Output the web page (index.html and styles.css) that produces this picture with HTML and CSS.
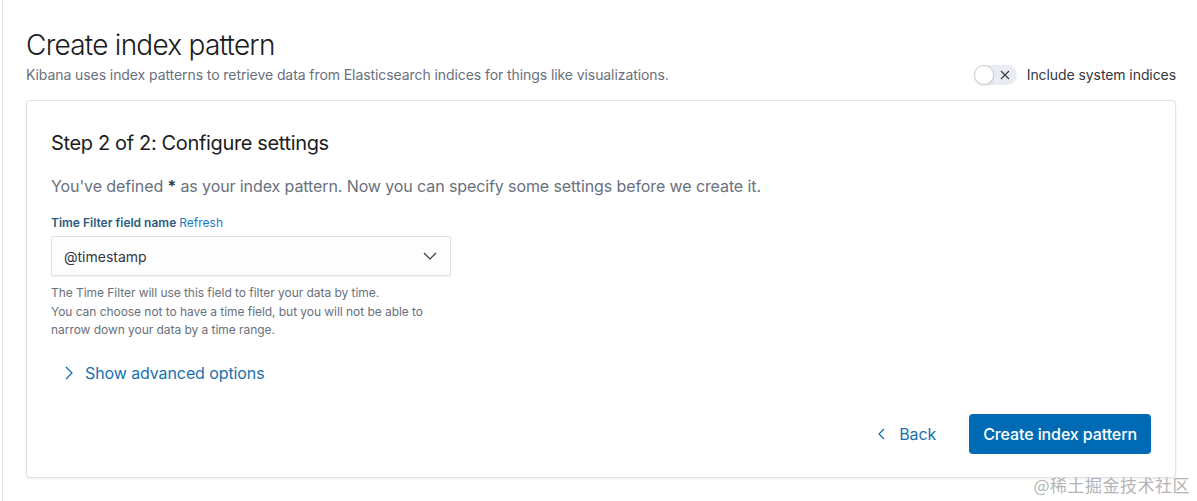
FILE: index.html
```html
<!DOCTYPE html>
<html lang="en">
<head>
  <meta charset="UTF-8">
  <meta name="viewport" content="width=device-width, initial-scale=1.0">
  <title>Create index pattern</title>
  <link rel="stylesheet" href="styles.css">
</head>
<body>
  <div class="page">
    <div class="header">
      <div class="header-text">
        <h1 class="title">Create index pattern</h1>
        <p class="subtitle">Kibana uses index patterns to retrieve data from Elasticsearch indices for things like visualizations.</p>
      </div>
      <label class="switch">
        <span class="switch-track">
          <span class="switch-thumb"></span>
          <svg class="switch-x" width="10" height="10" viewBox="0 0 10 10">
            <path d="M1 1 L9 9 M9 1 L1 9" stroke="#343741" stroke-width="1.1" fill="none"/>
          </svg>
        </span>
        <span class="switch-label">Include system indices</span>
      </label>
    </div>

    <div class="panel">
      <h2 class="step-title">Step 2 of 2: Configure settings</h2>
      <p class="step-desc">You've defined <strong>*</strong> as your index pattern. Now you can specify some settings before we create it.</p>

      <div class="field">
        <div class="field-label">Time Filter field name <a class="refresh" href="#">Refresh</a></div>
        <div class="select">
          <span>@timestamp</span>
          <svg width="14" height="8" viewBox="0 0 14 8">
            <path d="M1 1 L7 7 L13 1" stroke="#343741" stroke-width="1.2" fill="none"/>
          </svg>
        </div>
        <div class="help">
          The Time Filter will use this field to filter your data by time.<br>
          You can choose not to have a time field, but you will not be able to<br>
          narrow down your data by a time range.
        </div>
      </div>

      <a class="advanced" href="#">
        <svg width="8" height="14" viewBox="0 0 8 14">
          <path d="M1 1 L7 7 L1 13" stroke="#006bb4" stroke-width="1.2" fill="none"/>
        </svg>
        Show advanced options
      </a>

      <div class="actions">
        <a class="back" href="#">
          <svg width="7" height="12" viewBox="0 0 7 12">
            <path d="M6 1 L1 6 L6 11" stroke="#006bb4" stroke-width="1.2" fill="none"/>
          </svg>
          Back
        </a>
        <button class="primary">Create index pattern</button>
      </div>
    </div>
  </div>
  <div class="watermark">@稀土掘金技术社区</div>
</body>
</html>
```

FILE: styles.css
```css
body {
  margin: 0;
  padding-left: 2px;
  font-family: Inter, "Noto Sans", sans-serif;
  background: #fff;
  color: #1a1c21;
  height: 501px;
  overflow: hidden;
  position: relative;
}

.page {
  border-left: 1px solid #e4e4e4;
  height: 100%;
  padding: 27px 21px 0 23px;
  box-sizing: border-box;
}

.header {
  display: flex;
  justify-content: space-between;
  align-items: flex-end;
  margin-bottom: 15px;
}

.title {
  margin: 0;
  font-size: 28px;
  line-height: 36px;
  font-weight: 300;
  color: #1a1c21;
  letter-spacing: -0.75px;
}

.subtitle {
  margin: 2px 0 0;
  font-size: 14px;
  line-height: 20px;
  color: #69707d;
  letter-spacing: -0.08px;
}

.switch {
  display: flex;
  align-items: center;
  gap: 10px;
  height: 20px;
}

.switch-track {
  position: relative;
  width: 43px;
  height: 20px;
  border-radius: 10px;
  background: #e9edf3;
  display: block;
}

.switch-thumb {
  position: absolute;
  left: 0;
  top: 0;
  width: 18px;
  height: 18px;
  border-radius: 50%;
  background: #fff;
  border: 1px solid #c9ced6;
  box-shadow: 0 1px 2px rgba(0, 0, 0, 0.1);
}

.switch-x {
  position: absolute;
  left: 26px;
  top: 5px;
}

.switch-label {
  font-size: 14px;
  line-height: 20px;
  color: #343741;
  letter-spacing: -0.08px;
}

.panel {
  border: 1px solid #dfe2e7;
  border-radius: 4px;
  box-shadow: 0 1px 3px rgba(0, 0, 0, 0.08);
  padding: 28px 24px 23px 24px;
  background: #fff;
}

.step-title {
  margin: 0;
  font-size: 20px;
  line-height: 28px;
  font-weight: 400;
  color: #1a1c21;
  letter-spacing: -0.35px;
}

.step-desc {
  margin: 17px 0 0;
  font-size: 16px;
  line-height: 24px;
  color: #69707d;
  letter-spacing: -0.1px;
}

.step-desc strong {
  font-weight: 600;
  color: #343741;
}

.field {
  margin-top: 16px;
  width: 400px;
}

.field-label {
  font-size: 12px;
  line-height: 18px;
  font-weight: 600;
  color: #2b5b82;
  margin-bottom: 4px;
}

.refresh {
  font-weight: 400;
  color: #1f7bbf;
  text-decoration: none;
}

.select {
  height: 40px;
  box-sizing: border-box;
  border: 1px solid #dfe3e8;
  border-radius: 2px;
  background: #fdfdfe;
  box-shadow: 0 1px 2px rgba(0, 0, 0, 0.06);
  display: flex;
  align-items: center;
  justify-content: space-between;
  padding: 0 13px 0 12px;
  font-size: 14px;
  color: #343741;
}

.help {
  margin-top: 8px;
  font-size: 12px;
  line-height: 18.5px;
  color: #69707d;
  letter-spacing: -0.05px;
}

.advanced {
  display: inline-flex;
  align-items: center;
  gap: 12px;
  margin-top: 21px;
  margin-left: 14px;
  font-size: 16px;
  line-height: 24px;
  color: #1a6fb0;
  text-decoration: none;
  letter-spacing: -0.1px;
}

.actions {
  display: flex;
  justify-content: flex-end;
  align-items: center;
  gap: 33px;
  margin-top: 29px;
}

.back {
  display: inline-flex;
  align-items: center;
  gap: 14px;
  font-size: 16px;
  color: #1a6fb0;
  text-decoration: none;
  letter-spacing: -0.1px;
}

.primary {
  height: 40px;
  padding: 0 14px;
  border: none;
  border-radius: 4px;
  background: #006bb4;
  color: #fff;
  font-family: inherit;
  font-size: 16px;
  font-weight: 500;
  letter-spacing: -0.1px;
}

.watermark {
  position: absolute;
  right: 7px;
  bottom: 4px;
  font-family: "Noto Sans CJK SC", sans-serif;
  font-size: 17px;
  color: #b4b4b4;
  letter-spacing: 0.5px;
}
```
